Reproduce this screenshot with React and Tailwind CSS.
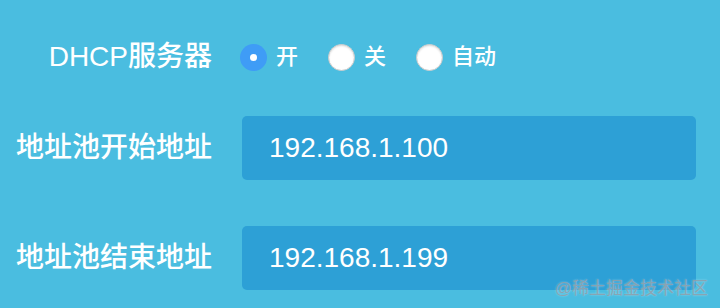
import { useState } from "react";

const FONT = "font-['Liberation_Sans','Noto_Sans_CJK_SC',sans-serif]";

const Radio = ({ label, checked, onClick }) => (
  <button onClick={onClick} className="flex items-center gap-[9px]">
    {checked ? (
      <span className="w-[27px] h-[27px] rounded-full bg-[#3f9cf6] flex items-center justify-center">
        <span className="w-[7px] h-[7px] rounded-full bg-white"></span>
      </span>
    ) : (
      <span className="w-[27px] h-[27px] rounded-full bg-white border border-[#c9c9c9] shadow-[inset_0_1px_2px_rgba(0,0,0,0.15)]"></span>
    )}
    <span className="text-[22px] text-white leading-none font-medium">{label}</span>
  </button>
);

const Field = ({ label, value }) => (
  <div className="flex items-center">
    <div className="w-[212px] text-right text-[28px] text-white leading-none font-medium">{label}</div>
    <div className="ml-[30px] w-[454px] h-[64px] rounded-[5px] bg-[#2da0d6] flex items-center pl-[27px]">
      <span className="text-[28px] text-white leading-none">{value}</span>
    </div>
  </div>
);

export default function App() {
  const [mode, setMode] = useState("on");

  return (
    <div className={`relative w-[720px] h-[308px] bg-[#4abde0] overflow-hidden ${FONT}`}>
      <div className="flex flex-col pt-[43px]">
        {/* DHCP toggle */}
        <div className="flex items-center h-[28px]">
          <div className="w-[212px] text-right text-[28px] text-white leading-none font-medium">DHCP服务器</div>
          <div className="ml-[28px] flex items-center gap-[30px]">
            <Radio label="开" checked={mode === "on"} onClick={() => setMode("on")} />
            <Radio label="关" checked={mode === "off"} onClick={() => setMode("off")} />
            <Radio label="自动" checked={mode === "auto"} onClick={() => setMode("auto")} />
          </div>
        </div>

        <div className="mt-[45px]">
          <Field label="地址池开始地址" value="192.168.1.100" />
        </div>
        <div className="mt-[46px]">
          <Field label="地址池结束地址" value="192.168.1.199" />
        </div>
      </div>

      <div className="absolute right-[12px] bottom-[11px] text-[17px] leading-none text-[rgba(140,158,170,0.85)] [text-shadow:0_0_2px_rgba(255,255,255,0.45)]">
        @稀土掘金技术社区
      </div>
    </div>
  );
}
